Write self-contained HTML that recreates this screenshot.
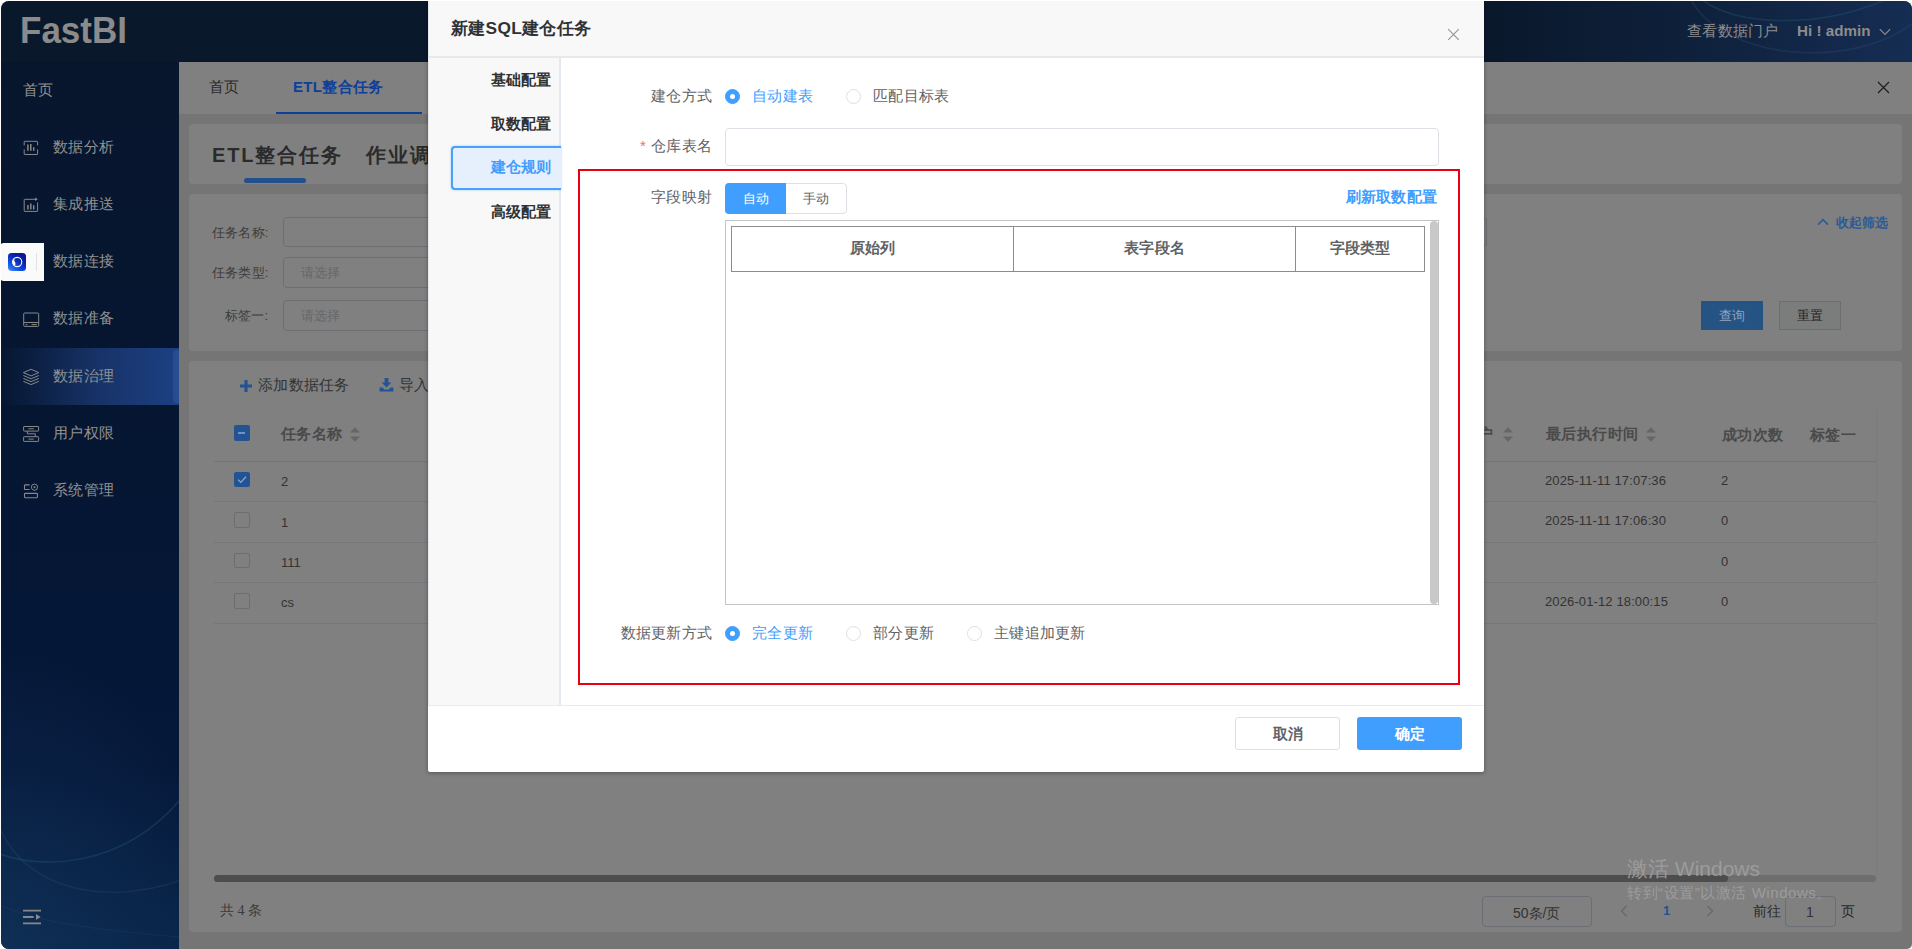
<!DOCTYPE html>
<html lang="zh">
<head>
<meta charset="utf-8">
<title>FastBI</title>
<style>
*{box-sizing:border-box;margin:0;padding:0}
html,body{width:1912px;height:949px;overflow:hidden;background:#fff;font-family:"Liberation Sans",sans-serif;}
.abs{position:absolute}
#app{position:absolute;left:1px;top:1px;width:1911px;height:948px;overflow:hidden;border-radius:8px 8px 5px 8px;background:#757576;}
/* ---------- top bar ---------- */
#w{position:absolute;left:-1px;top:-1px;width:1912px;height:949px}
#topbar{position:absolute;left:0;top:0;width:1912px;height:62px;background:linear-gradient(90deg,#0a182c 0%,#0a182c 78%,#0e203a 88%,#162d53 100%);overflow:hidden}
#logo{position:absolute;left:20px;top:11px;font-size:35px;font-weight:bold;color:#8b8b8b;line-height:40px;letter-spacing:0px;transform-origin:0 31.6px;transform:translateY(-.5px) scaleY(1.04)}
.tr{position:absolute;top:21px;font-size:15px;line-height:20px;color:#8d8d8d;white-space:nowrap}
/* ---------- sidebar ---------- */
#side{position:absolute;left:0;top:62px;width:179px;height:887px;background:radial-gradient(ellipse 230px 300px at 0% 100%,rgba(22,58,98,.5) 0%,rgba(22,58,98,0) 100%),linear-gradient(180deg,#08162d 0%,#061631 35%,#051736 60%,#05183a 80%,#082448 100%);overflow:hidden}
.mi{position:absolute;left:53px;font-size:15px;line-height:20px;color:#919191;white-space:nowrap;letter-spacing:.25px}
.ic{position:absolute;left:23px;width:16px;height:16px}
.ic svg{display:block;width:16px;height:16px;overflow:visible}
#active{position:absolute;left:0;top:286px;width:179px;height:57px;background:linear-gradient(90deg,rgba(29,62,125,0) 0%,rgba(27,58,117,.3) 22%,rgba(27,58,117,.8) 55%,#1d4083 100%)}
/* ---------- content ---------- */
#tabs{position:absolute;left:179px;top:62px;width:1733px;height:52px;background:#808080}
.card{position:absolute;left:189px;width:1713px;background:#808080;border-radius:4px}
.t{position:absolute;white-space:nowrap}
.inp{position:absolute;border:1px solid #6d6e74;border-radius:4px;height:30px}
/* ---------- modal ---------- */
#modal{position:absolute;left:428px;top:0px;width:1056px;height:772px;background:#fff;border-radius:2px;box-shadow:0 1px 4px rgba(0,0,0,.35)}
#mhead{position:absolute;left:0;top:0;width:1056px;height:58px;background:#f8f8f8;border-bottom:2px solid #e8e8ea;border-top:1px solid #ededee;border-left:1px solid #e6e7ec}
#mnav{position:absolute;left:0;top:58px;width:133px;height:648px;background:#f8f8f8;border-right:2px solid #e4e8f0;border-left:1px solid #e6e8ee}
.nv{position:absolute;right:7.3px;font-size:15px;font-weight:bold;color:#303133;line-height:20px;letter-spacing:.2px;white-space:nowrap}
.lb{position:absolute;font-size:15px;color:#606266;line-height:20px;letter-spacing:.25px;white-space:nowrap;text-align:right;width:140px}
.rd{position:absolute;width:15px;height:15px;border-radius:50%;border:1px solid #dcdfe6;background:#fff}
.rd.on{border-color:#409eff;background:#409eff}
.rd.on::after{content:"";position:absolute;left:4px;top:4px;width:5px;height:5px;border-radius:50%;background:#fff}
.rl{position:absolute;font-size:15px;line-height:20px;color:#606266;letter-spacing:.25px;white-space:nowrap}
.rl.on{color:#409eff}
</style>
</head>
<body>
<div id="app"><div id="w">
<div id="topbar">
  <svg class="abs" style="left:1380px;top:0" width="532" height="62" viewBox="0 0 532 62"><path d="M322 0 C 360 27 440 28 505 0" fill="none" stroke="#1f5a6e" stroke-width="1.6" opacity=".38"/><path d="M311 0 C 345 60 470 70 532 24" fill="none" stroke="#2a4a6e" stroke-width="1.6" opacity=".36"/></svg>
  <div id="logo">FastBI</div>
  <div class="tr" style="left:1687px;letter-spacing:.25px">查看数据门户</div>
  <div class="tr" style="left:1797px;font-weight:bold;font-size:15.2px">Hi ! admin</div>
  <svg class="abs" style="left:1879px;top:28px" width="12" height="8" viewBox="0 0 12 8"><path d="M.8 1.2 L6 6.4 L11.2 1.2" fill="none" stroke="#8d8d8d" stroke-width="1.2"/></svg>
</div>
<div id="side">
  <div id="active"></div><div class="abs" style="left:173px;top:288px;width:6px;height:53px;border-radius:4px 0 0 4px;background:rgba(70,110,180,.28)"></div>
  <svg class="abs" style="left:0;top:647px" width="179" height="240" viewBox="0 0 179 240"><path d="M0 145 C 40 160 120 160 179 92" fill="none" stroke="#2b6a78" stroke-width="1.5" opacity=".3"/><path d="M0 120 C 30 185 110 195 179 172" fill="none" stroke="#3a5878" stroke-width="1.5" opacity=".24"/><path d="M0 196 C 40 215 110 222 179 228" fill="none" stroke="#3a5878" stroke-width="1.4" opacity=".16"/></svg>
  <div class="mi" style="left:23px;top:18px">首页</div>
  <div class="mi" style="top:75px">数据分析</div>
  <div class="ic" style="top:78px"><svg viewBox="0 0 16 16"><path d="M1.2 5.4V1.8a.5.5 0 0 1 .5-.5h12.4a.5.5 0 0 1 .5.5v3.6M14.6 9.4v4.6a.5.5 0 0 1-.5.5H1.7a.5.5 0 0 1-.5-.5V9.4" fill="none" stroke="#888888" stroke-width="1"/><path d="M4.9 4.4v6.4M7.8 3.9v6.9M10.7 7.2v3.6" fill="none" stroke="#888888" stroke-width="1.5"/></svg></div>
  <div class="mi" style="top:132px">集成推送</div>
  <div class="ic" style="top:135px"><svg viewBox="0 0 16 16"><path d="M13 2.3H1.7a.5.5 0 0 0-.5.5v11.1a.5.5 0 0 0 .5.5h12.4a.5.5 0 0 0 .5-.5V5.4" fill="none" stroke="#888888" stroke-width="1"/><path d="M12 .5l2.8 1.8-2.8 1.8z" fill="#888888"/><path d="M4.9 8v4.4M7.8 6.4v6M10.7 8.2v4.2" fill="none" stroke="#888888" stroke-width="1.5"/></svg></div>
  <div class="mi" style="top:189px">数据连接</div>
  <div class="mi" style="top:246px">数据准备</div>
  <div class="ic" style="top:249px"><svg viewBox="0 0 16 16"><rect x=".7" y="2" width="15" height="13.4" rx="1" fill="none" stroke="#888888" stroke-width="1"/><path d="M.7 11.5h15" stroke="#888888" stroke-width="1"/><path d="M2.6 13.6h1.8M8.6 13.6h5.2" stroke="#888888" stroke-width="1"/></svg></div>
  <div class="mi" style="top:304px">数据治理</div>
  <div class="ic" style="top:307px"><svg viewBox="0 0 16 16"><path d="M8.1 .3L15.8 3.6 8.1 6.9.4 3.6z M.4 6.5L8.1 9.8l7.7-3.3 M.4 9.4L8.1 12.7l7.7-3.3 M.4 12.3L8.1 15.6l7.7-3.3" fill="none" stroke="#888888" stroke-width="1" stroke-linejoin="round"/></svg></div>
  <div class="mi" style="top:361px">用户权限</div>
  <div class="ic" style="top:364px"><svg viewBox="0 0 16 16"><rect x=".6" y=".5" width="15" height="4.6" rx=".5" fill="none" stroke="#888888" stroke-width="1"/><rect x=".6" y="10.7" width="15" height="4.7" rx=".5" fill="none" stroke="#888888" stroke-width="1"/><path d="M5.4 2.8h5.4M5.4 13.1h5.4" stroke="#888888" stroke-width="1"/><path d="M4.3 5.1v2.7h8v2.9" fill="none" stroke="#888888" stroke-width="1"/></svg></div>
  <div class="mi" style="top:418px">系统管理</div>
  <div class="ic" style="top:421px"><svg viewBox="0 0 16 16"><path d="M6.6 1.9H2.1a.6.6 0 0 0-.6.6v3.4a.6.6 0 0 0 .6.6h4.5" fill="none" stroke="#888888" stroke-width="1.1"/><circle cx="11.5" cy="4.2" r="3.1" fill="none" stroke="#888888" stroke-width="1"/><circle cx="11.5" cy="4.2" r="1" fill="#888888"/><rect x="1.5" y="10.4" width="12.9" height="4.3" rx=".6" fill="none" stroke="#888888" stroke-width="1.1"/></svg></div>
  <svg class="abs" style="left:23px;top:847px" width="20" height="16" viewBox="0 0 20 16"><path d="M0 1.6h18M0 8h10.6M0 14.4h18" stroke="#888888" stroke-width="1.9"/><path d="M13 5l4.6 3-4.6 3z" fill="#888888"/></svg>
</div>
<div class="abs" style="left:0;top:243px;width:44px;height:38px;background:#fafafa;border-radius:4px 0 0 4px"></div>
<div class="abs" style="left:8px;top:253px;width:18px;height:18px;border-radius:3.5px;background:linear-gradient(215deg,#0a128a 0%,#0b1fa8 35%,#0f52e4 70%,#2a7af5 88%,#b9a6ea 100%)"></div>
<svg class="abs" style="left:8px;top:253px" width="18" height="18" viewBox="0 0 18 18"><circle cx="9.2" cy="9" r="4.6" fill="none" stroke="#fff" stroke-width="1.1"/><path d="M5 7.2a4.4 4.4 0 0 0 1.6 5.6a3 3 0 0 0 0.6-3.4a2.4 2.4 0 0 1-.4-3.4z" fill="#fff"/></svg>
<div class="abs" style="left:36px;top:253px;width:1px;height:18px;background:#e2e2e2"></div>
<div id="tabs">
  <div class="t" style="left:30px;top:15px;font-size:15px;line-height:20px;color:#2a2a2a;letter-spacing:.2px">首页</div>
  <div class="t" style="left:114px;top:15px;font-size:15px;line-height:20px;color:#0e3f9a;font-weight:bold;letter-spacing:.35px">ETL整合任务</div>
  <div class="abs" style="left:97px;top:50px;width:146px;height:2px;background:#0e3f9a"></div>
  <svg class="abs" style="left:1698px;top:18.8px" width="13" height="13" viewBox="0 0 13 13"><path d="M1 1l11 11M12 1L1 12" stroke="#1c1c1c" stroke-width="1.2"/></svg>
</div>
<div class="card" style="top:124px;height:60px">
  <div class="t" style="left:23px;top:17px;font-size:20px;line-height:28px;font-weight:bold;color:#2b2b2b;letter-spacing:1.9px">ETL整合任务</div>
  <div class="t" style="left:177px;top:17px;font-size:20px;line-height:28px;font-weight:bold;color:#2b2b2b;letter-spacing:1.9px">作业调度</div>
  <div class="abs" style="left:55px;top:54px;width:62px;height:5px;border-radius:2.5px;background:#22508c"></div>
</div>
<div class="card" style="top:194px;height:157px">
  <div class="t" style="left:23px;top:30px;font-size:13px;line-height:18px;color:#3c3c3c;letter-spacing:.2px">任务名称:</div>
  <div class="t" style="left:23px;top:70px;font-size:13px;line-height:18px;color:#3c3c3c;letter-spacing:.2px">任务类型:</div>
  <div class="t" style="left:36px;top:113px;font-size:13px;line-height:18px;color:#3c3c3c;letter-spacing:.2px">标签一:</div>
  <div class="inp" style="left:94px;top:23px;width:1204px"></div>
  <div class="inp" style="left:94px;top:63px;width:400px;height:31px"></div>
  <div class="inp" style="left:94px;top:106px;width:400px;height:31px"></div>
  <div class="t" style="left:112px;top:70px;font-size:13px;line-height:18px;color:#666768">请选择</div>
  <div class="t" style="left:112px;top:113px;font-size:13px;line-height:18px;color:#666768">请选择</div>
  <svg class="abs" style="left:1628px;top:24px" width="12" height="8" viewBox="0 0 12 8"><path d="M1 6.6L6 1.6l5 5" fill="none" stroke="#2a5a98" stroke-width="1.5"/></svg>
  <div class="t" style="left:1647px;top:20px;font-size:13px;line-height:18px;color:#2a5a98;font-weight:bold">收起筛选</div>
  <div class="abs" style="left:1512px;top:107px;width:62px;height:29px;background:#245384;border-radius:0"></div>
  <div class="t" style="left:1530px;top:113px;font-size:13px;line-height:18px;color:#8fa4bd">查询</div>
  <div class="abs" style="left:1590px;top:107px;width:62px;height:29px;background:#7b7c7c;border:1px solid #6c6d6e;border-radius:0"></div>
  <div class="t" style="left:1608px;top:113px;font-size:13px;line-height:18px;color:#262626">重置</div>
</div>
<div class="card" style="top:361px;height:571px">
  <svg class="abs" style="left:51px;top:19px" width="12" height="12" viewBox="0 0 12 12"><path d="M6 0v12M0 6h12" stroke="#235392" stroke-width="3.1"/></svg>
  <div class="t" style="left:69px;top:14px;font-size:15px;line-height:20px;color:#333;letter-spacing:.25px">添加数据任务</div>
  <svg class="abs" style="left:190px;top:17px" width="15" height="14" viewBox="0 0 15 14"><path d="M5.6 0h3.8v4.6h3L7.5 9.4 2.6 4.6h3z M.6 9.6h3l1.6 2h4.6l1.6-2h3V13.6H.6z" fill="#235392"/></svg>
  <div class="t" style="left:210px;top:14px;font-size:15px;line-height:20px;color:#333;letter-spacing:.25px">导入任务</div>
  <!-- table -->
  <div class="abs" style="left:25px;top:100px;width:1662px;height:1px;background:#747576"></div>
  <div class="abs" style="left:25px;top:140px;width:1662px;height:1px;background:#767778"></div>
  <div class="abs" style="left:25px;top:181px;width:1662px;height:1px;background:#767778"></div>
  <div class="abs" style="left:25px;top:221px;width:1662px;height:1px;background:#767778"></div>
  <div class="abs" style="left:25px;top:262px;width:1662px;height:1px;background:#767778"></div>
  <div class="abs" style="left:1687px;top:48px;width:1px;height:473px;background:#7a7b7c"></div>
  <div class="abs" style="left:45px;top:64px;width:16px;height:16px;border-radius:2px;background:#235392"></div>
  <div class="abs" style="left:49px;top:71px;width:7px;height:2px;background:#6f93c4"></div>
  <div class="t" style="left:92px;top:63px;font-size:15px;line-height:20px;font-weight:bold;color:#4a4a4a;letter-spacing:.25px">任务名称</div>
  <svg class="abs" style="left:161px;top:66px" width="10" height="16" viewBox="0 0 10 16"><path d="M5 .2L10 5.6H0z M5 14.8L10 9.6H0z" fill="#656668"/></svg>
  <div class="abs" style="left:45px;top:111px;width:16px;height:15px;border-radius:2px;background:#235392"></div>
  <svg class="abs" style="left:45px;top:110px" width="16" height="16" viewBox="0 0 16 16"><path d="M4 8.6l2.8 2.8L12 5.8" fill="none" stroke="#8fa8cc" stroke-width="1.3"/></svg>
  <div class="abs" style="left:45px;top:151px;width:16px;height:16px;border-radius:2px;border:1px solid #6d6e70"></div>
  <div class="abs" style="left:45px;top:192px;width:16px;height:15px;border-radius:2px;border:1px solid #6d6e70"></div>
  <div class="abs" style="left:45px;top:232px;width:16px;height:16px;border-radius:2px;border:1px solid #6d6e70"></div>
  <div class="t" style="left:92px;top:112px;font-size:13px;line-height:18px;color:#333">2</div>
  <div class="t" style="left:92px;top:153px;font-size:13px;line-height:18px;color:#333">1</div>
  <div class="t" style="left:92px;top:193px;font-size:13px;line-height:18px;color:#333">111</div>
  <div class="t" style="left:92px;top:233px;font-size:13px;line-height:18px;color:#333">cs</div>
  <!-- right columns -->
  <div class="t" style="left:1289px;top:63px;font-size:15px;line-height:20px;font-weight:bold;color:#4a4a4a;letter-spacing:.25px">户</div>
  <svg class="abs" style="left:1314px;top:66px" width="10" height="16" viewBox="0 0 10 16"><path d="M5 .2L10 5.6H0z M5 14.8L10 9.6H0z" fill="#656668"/></svg>
  <div class="t" style="left:1357px;top:63px;font-size:15px;line-height:20px;font-weight:bold;color:#4a4a4a;letter-spacing:.4px">最后执行时间</div>
  <svg class="abs" style="left:1457px;top:66px" width="10" height="16" viewBox="0 0 10 16"><path d="M5 .2L10 5.6H0z M5 14.8L10 9.6H0z" fill="#656668"/></svg>
  <div class="t" style="left:1533px;top:64px;font-size:15px;line-height:20px;font-weight:bold;color:#4a4a4a;letter-spacing:.25px">成功次数</div>
  <div class="t" style="left:1621px;top:64px;font-size:15px;line-height:20px;font-weight:bold;color:#4a4a4a;letter-spacing:.25px">标签一</div>
  <div class="t" style="left:1356px;top:111px;font-size:13px;line-height:18px;color:#333;letter-spacing:.12px">2025-11-11 17:07:36</div>
  <div class="t" style="left:1356px;top:151px;font-size:13px;line-height:18px;color:#333;letter-spacing:.12px">2025-11-11 17:06:30</div>
  <div class="t" style="left:1356px;top:232px;font-size:13px;line-height:18px;color:#333;letter-spacing:.12px">2026-01-12 18:00:15</div>
  <div class="t" style="left:1532px;top:111px;font-size:13px;line-height:18px;color:#333">2</div>
  <div class="t" style="left:1532px;top:151px;font-size:13px;line-height:18px;color:#333">0</div>
  <div class="t" style="left:1532px;top:192px;font-size:13px;line-height:18px;color:#333">0</div>
  <div class="t" style="left:1532px;top:232px;font-size:13px;line-height:18px;color:#333">0</div>
  <!-- scrollbar -->
  <div class="abs" style="left:25px;top:514px;width:1662px;height:7px;border-radius:4px;background:#6e6e6e"></div>
  <div class="abs" style="left:25px;top:514px;width:1514px;height:7px;border-radius:4px;background:#4d4d4d"></div>
  <!-- pagination -->
  <div class="t" style="left:31px;top:540px;font-family:'Liberation Serif',serif;font-size:14px;line-height:20px;color:#3a3a3a">共 4 条</div>
  <div class="abs" style="left:1293px;top:535px;width:110px;height:31px;border:1px solid #6c6d74;border-radius:4px"></div>
  <div class="t" style="left:1324px;top:542px;font-size:14px;line-height:20px;color:#333">50条/页</div>
  <svg class="abs" style="left:1431px;top:544px" width="8" height="12" viewBox="0 0 8 12"><path d="M6.5 1L1.5 6l5 5" fill="none" stroke="#666" stroke-width="1.2"/></svg>
  <div class="t" style="left:1474px;top:540px;font-size:13px;line-height:20px;font-weight:bold;color:#235392">1</div>
  <svg class="abs" style="left:1517px;top:544px" width="8" height="12" viewBox="0 0 8 12"><path d="M1.5 1l5 5-5 5" fill="none" stroke="#666" stroke-width="1.2"/></svg>
  <div class="t" style="left:1564px;top:540px;font-size:14px;line-height:20px;color:#2a2a2a">前往</div>
  <div class="abs" style="left:1596px;top:535px;width:51px;height:31px;border:1px solid #6c6d74;border-radius:4px"></div>
  <div class="t" style="left:1617px;top:541px;font-size:14px;line-height:20px;color:#333">1</div>
  <div class="t" style="left:1652px;top:540px;font-size:14px;line-height:20px;color:#2a2a2a">页</div>
</div>
<div class="t" style="left:1627px;top:855px;font-size:21px;line-height:28px;color:#a3a3a3;opacity:.8">激活 Windows</div>
<div class="t" style="left:1627px;top:883px;font-size:15px;line-height:20px;color:#a3a3a3;opacity:.8;letter-spacing:.55px">转到“设置”以激活 Windows。</div>
<div id="modal">
  <div id="mhead">
    <div class="t" style="left:22px;top:14px;font-size:17.3px;line-height:26px;font-weight:bold;color:#303133;letter-spacing:.3px">新建SQL建仓任务</div>
    <svg class="abs" style="left:1018px;top:27px" width="13" height="13" viewBox="0 0 13 13"><path d="M1.2 1.2l10.6 10.6M11.8 1.2L1.2 11.8" stroke="#8f9299" stroke-width="1.1"/></svg>
  </div>
  <div id="mnav">
    <div class="abs" style="left:22px;top:88px;width:110px;height:44px;background:#e6effc;border:2px solid #4aa0fb;border-right:none;border-radius:4px 0 0 4px;box-shadow:0 0 2px rgba(64,158,255,.6)"></div>
    <div class="nv" style="top:12px">基础配置</div>
    <div class="nv" style="top:56px">取数配置</div>
    <div class="nv" style="top:99px;color:#409eff">建仓规则</div>
    <div class="nv" style="top:144px">高级配置</div>
  </div>
  <div class="abs" style="left:0;top:705px;width:1056px;height:1px;background:#e8eaee"></div>
  <!-- row 1 -->
  <div class="lb" style="left:144px;top:86px">建仓方式</div>
  <div class="rd on" style="left:297px;top:89px"></div><div class="rl on" style="left:324px;top:86px">自动建表</div>
  <div class="rd" style="left:418px;top:89px"></div><div class="rl" style="left:445px;top:86px">匹配目标表</div>
  <!-- row 2 -->
  <div class="lb" style="left:144px;top:136px"><span style="color:#f56c6c;margin-right:4px;position:relative;left:-1px">*</span>仓库表名</div>
  <div class="abs" style="left:297px;top:128px;width:714px;height:38px;border:1px solid #dcdfe6;border-radius:4px;background:#fff"></div>
  <!-- red rect -->
  <div class="abs" style="left:150px;top:169px;width:882px;height:516px;border:2px solid #e60012"></div>
  <!-- row 3 -->
  <div class="lb" style="left:144px;top:187px">字段映射</div>
  <div class="abs" style="left:297px;top:183px;width:122px;height:31px;border:1px solid #dcdfe6;border-radius:4px;background:#fff"></div>
  <div class="abs" style="left:297px;top:183px;width:61px;height:31px;border-radius:4px 0 0 4px;background:#409eff"></div>
  <div class="t" style="left:315px;top:190px;font-size:12.5px;line-height:18px;color:#fff">自动</div>
  <div class="t" style="left:375px;top:190px;font-size:12.5px;line-height:18px;color:#606266">手动</div>
  <div class="t" style="right:47px;top:187px;font-size:15px;line-height:20px;font-weight:bold;color:#409eff;letter-spacing:.25px">刷新取数配置</div>
  <!-- table box -->
  <div class="abs" style="left:297px;top:220px;width:714px;height:385px;border:1px solid #c4c4c4;background:#fff"></div>
  <div class="abs" style="left:303px;top:226px;width:694px;height:46px;border:1px solid #8c8c8c"></div>
  <div class="abs" style="left:585px;top:226px;width:1px;height:46px;background:#8c8c8c"></div>
  <div class="abs" style="left:867px;top:226px;width:1px;height:46px;background:#8c8c8c"></div>
  <div class="t" style="left:303px;top:238px;width:283px;text-align:center;font-size:15px;line-height:20px;font-weight:bold;color:#606266;letter-spacing:.25px">原始列</div>
  <div class="t" style="left:585px;top:238px;width:283px;text-align:center;font-size:15px;line-height:20px;font-weight:bold;color:#606266;letter-spacing:.25px">表字段名</div>
  <div class="t" style="left:867px;top:238px;width:130px;text-align:center;font-size:15px;line-height:20px;font-weight:bold;color:#606266;letter-spacing:.25px">字段类型</div>
  <div class="abs" style="left:1002px;top:221px;width:8px;height:383px;border-radius:4px;background:#c8c8c8"></div>
  <!-- row 4 -->
  <div class="lb" style="left:144px;top:623px">数据更新方式</div>
  <div class="rd on" style="left:297px;top:626px"></div><div class="rl on" style="left:324px;top:623px">完全更新</div>
  <div class="rd" style="left:418px;top:626px"></div><div class="rl" style="left:445px;top:623px">部分更新</div>
  <div class="rd" style="left:539px;top:626px"></div><div class="rl" style="left:566px;top:623px">主键追加更新</div>
  <!-- footer -->
  <div class="abs" style="left:807px;top:717px;width:105px;height:33px;border:1px solid #dcdfe6;border-radius:3px;background:#fff"></div>
  <div class="t" style="left:807px;top:724px;width:105px;text-align:center;font-size:14.5px;line-height:20px;font-weight:bold;color:#606266;letter-spacing:0">取消</div>
  <div class="abs" style="left:929px;top:717px;width:105px;height:33px;border-radius:3px;background:#409eff"></div>
  <div class="t" style="left:929px;top:724px;width:105px;text-align:center;font-size:14.5px;line-height:20px;font-weight:bold;color:#fff;letter-spacing:0">确定</div>
</div>
</div></div>
</body>
</html>
